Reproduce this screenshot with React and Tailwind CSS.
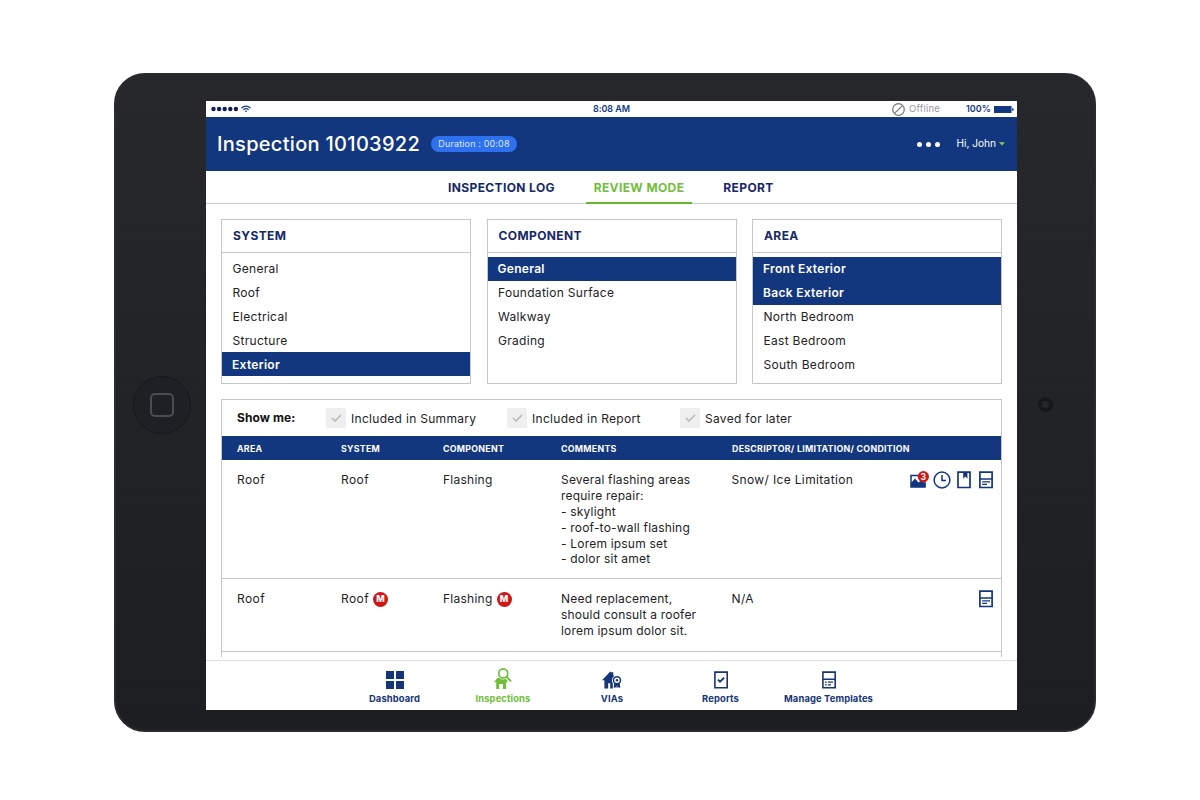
import { useState } from 'react'

const panels = [
  {
    title: 'SYSTEM',
    items: ['General', 'Roof', 'Electrical', 'Structure', 'Exterior'],
    selected: ['Exterior'],
  },
  {
    title: 'COMPONENT',
    items: ['General', 'Foundation Surface', 'Walkway', 'Grading'],
    selected: ['General'],
  },
  {
    title: 'AREA',
    items: ['Front Exterior', 'Back Exterior', 'North Bedroom', 'East Bedroom', 'South Bedroom'],
    selected: ['Front Exterior', 'Back Exterior'],
  },
]

const filters = [
  { label: 'Included in Summary', width: 'w-[181px]' },
  { label: 'Included in Report', width: 'w-[173px]' },
  { label: 'Saved for later', width: 'w-[150px]' },
]

const rows = [
  {
    area: 'Roof',
    system: 'Roof',
    component: 'Flashing',
    comments: [
      'Several flashing areas',
      'require repair:',
      '- skylight',
      '- roof-to-wall flashing',
      '- Lorem ipsum set',
      '- dolor sit amet',
    ],
    descriptor: 'Snow/ Ice Limitation',
    height: 'h-[119px]',
    full: true,
  },
  {
    area: 'Roof',
    system: 'Roof',
    component: 'Flashing',
    marked: true,
    comments: ['Need replacement,', 'should consult a roofer', 'lorem ipsum dolor sit.'],
    descriptor: 'N/A',
    height: 'h-[72.5px]',
  },
]

const PhotoIcon = () => (
  <svg width="20" height="18" viewBox="0 0 20 18">
    <path d="M1 4.5h14v11.5H1z" fill="#fff" stroke="#12377f" strokeWidth="1.5" />
    <path d="M1 12 5 7.5l3.5 4 2.5-2 4.5 3v3.5H1z" fill="#12377f" />
    <circle cx="13.4" cy="5.6" r="5.6" fill="#d21515" />
    <text x="13.4" y="8.6" fontSize="8.5" fontWeight="700" fill="#fff" textAnchor="middle">3</text>
  </svg>
)

const ClockIcon = () => (
  <svg width="18" height="18" viewBox="0 0 18 18" fill="none" stroke="#12377f" strokeWidth="1.5">
    <circle cx="9" cy="9" r="7.9" />
    <path d="M9 4v5.6h4" />
  </svg>
)

const BookmarkIcon = () => (
  <svg width="14" height="18" viewBox="0 0 14 18">
    <path d="M1 1.2h12v15.3H1z" fill="none" stroke="#12377f" strokeWidth="1.7" />
    <path d="M6.2 1h4.2v6.8L8.3 5.6 6.2 7.8z" fill="#12377f" />
  </svg>
)

const NoteIcon = () => (
  <svg width="14" height="18" viewBox="0 0 14 18" fill="none" stroke="#12377f">
    <path d="M.9 1.2h12.2v15.3H.9zM1 8h12" strokeWidth="1.7" />
    <path d="M3.2 10.8h7.8M3.2 13.3H8" strokeWidth="1.3" />
  </svg>
)

const DashboardIcon = () => (
  <svg width="18" height="18" viewBox="0 0 18 18" fill="currentColor">
    <path d="M0 0h8v8H0zM10 0h8v8h-8zM0 10h8v8H0zM10 10h8v8h-8z" />
  </svg>
)

const InspectionsIcon = () => (
  <svg width="18" height="22" viewBox="0 0 18 22">
    <path d="M0 15.2 3.4 11h8.8l1.8 4.2h-2V22H8.9v-5H5.2v5H2.2v-6.8z" fill="currentColor" />
    <circle cx="9.2" cy="6.6" r="5.9" fill="#fff" />
    <path d="m12.5 10 5 5" stroke="#fff" strokeWidth="3.4" />
    <circle cx="9.2" cy="6.4" r="4.5" fill="#fff" stroke="currentColor" strokeWidth="1.7" />
    <path d="m12.4 9.7 4.7 4.7" stroke="currentColor" strokeWidth="1.9" />
  </svg>
)

const ViasIcon = () => (
  <svg width="20" height="18" viewBox="0 0 20 18">
    <path d="M0 9.3 8.3.4l.8.8h2.2v3l2 2V17.6H8.2v-5.4H6.2v5.4H2.4V9.3z" fill="currentColor" />
    <circle cx="15" cy="9.3" r="5.1" fill="#fff" />
    <path d="M10.8 11H20v7h-9.2z" fill="#fff" />
    <path d="m12.3 12-.6 5 1.8-.7.9.8.6-3 .6 3 .9-.8 1.8.7-.6-5z" fill="currentColor" />
    <circle cx="15" cy="9.3" r="3.5" fill="#fff" stroke="currentColor" strokeWidth="1.5" />
    <circle cx="15" cy="9.3" r="1.2" fill="currentColor" />
  </svg>
)

const ReportsIcon = () => (
  <svg width="14" height="18" viewBox="0 0 14 18" fill="none" stroke="currentColor">
    <path d="M.9 1.1h12.3v15.7H.9z" strokeWidth="1.6" />
    <path d="m4 8.6 2 2 4.2-4" strokeWidth="1.9" />
  </svg>
)

const TemplatesIcon = () => (
  <svg width="14" height="18" viewBox="0 0 14 18" fill="none" stroke="currentColor">
    <path d="M.9 1.1h12.3v15.7H.9zM1 8.3h12" strokeWidth="1.6" />
    <path d="M3 11.2h1.7M5.8 11.2H11M3 13.8h1.7M5.8 13.8H9" strokeWidth="1.3" />
  </svg>
)

const tabs = [
  { label: 'Dashboard', icon: DashboardIcon, width: 'w-[108px]' },
  { label: 'Inspections', icon: InspectionsIcon, width: 'w-[109px]' },
  { label: 'VIAs', icon: ViasIcon, width: 'w-[109px]' },
  { label: 'Reports', icon: ReportsIcon, width: 'w-[108px]' },
  { label: 'Manage Templates', icon: TemplatesIcon, width: 'w-[108px]' },
]

const Marker = () => (
  <span className="ml-1 flex h-[15px] w-[15px] items-center justify-center rounded-full bg-[#d01616] text-[9px] font-extrabold tracking-normal text-white">
    M
  </span>
)

const StatusBar = () => (
  <div className="flex h-4 items-center text-[9px] font-semibold text-[#12377f]">
    <div className="flex w-[363px] items-center pl-[5px]">
      <svg width="28" height="6" viewBox="0 0 28 6" fill="#141c55">
        {[0, 1, 2, 3, 4].map((i) => (
          <circle key={i} cx={2.5 + i * 5.6} cy="3" r="2.2" />
        ))}
      </svg>
      <svg className="ml-[2px]" width="10" height="8" viewBox="0 0 10 8" fill="none" stroke="#12377f" strokeWidth="1.2">
        <path d="M.5 3Q5-.9 9.5 3M2.3 4.8Q5 2.6 7.7 4.8" />
        <path d="M3.7 5.9Q5 5 6.3 5.9L5 7.3z" fill="#12377f" stroke="none" />
      </svg>
    </div>
    <span className="w-[85px] text-center tracking-[-0.05px]">8:08 AM</span>
    <div className="ml-auto flex items-center pr-[3px]">
      <svg width="13" height="13" viewBox="0 0 13 13" fill="none" stroke="#77777b" strokeWidth="1.2">
        <circle cx="6.5" cy="6.5" r="5.8" />
        <path d="m2.8 10.2 7.4-7.4" />
      </svg>
      <span className="ml-1 w-[57px] text-[9.5px] font-normal tracking-[0.2px] text-[#98989c]">Offline</span>
      <span className="w-[28px] text-[9px]">100%</span>
      <svg width="20" height="7" viewBox="0 0 20 7" fill="#12377f">
        <path d="M0 0h17.5v7H0zM18.2 1.8Q19.8 2.3 19.8 3.5t-1.6 1.7z" />
      </svg>
    </div>
  </div>
)

const Panel = ({ panel, selected, onSelect }) => (
  <div className="h-[165px] w-[250px] border border-[#c4c6c9]">
    <h2 className="flex h-[33px] items-center border-b border-[#c4c6c9] pl-[11px] text-[12px] font-bold tracking-[0.4px] text-[#16276a]">
      {panel.title}
    </h2>
    <ul className="pt-1">
      {panel.items.map((item) => (
        <li
          key={item}
          onClick={() => onSelect(item)}
          className={
            selected.includes(item)
              ? 'flex h-[23.8px] cursor-pointer items-center bg-[#12377f] pl-[10px] pt-px text-[12px] font-semibold tracking-[0.3px] text-white'
              : 'flex h-[23.8px] cursor-pointer items-center pl-[10.5px] pt-px text-[12px] tracking-[0.3px]'
          }
        >
          {item}
        </li>
      ))}
    </ul>
  </div>
)

export default function App() {
  const [activeTab, setActiveTab] = useState('Inspections')
  const [selection, setSelection] = useState(panels.map((p) => p.selected))

  const select = (index, item) =>
    setSelection(selection.map((s, i) => (i === index ? [item] : s)))

  return (
    <div className="flex h-[800px] w-[1200px] justify-center overflow-hidden bg-white pl-[10px] pt-[73px] font-['Inter',sans-serif] text-[#222225]">
      {/* Tablet body */}
      <div className="flex h-[659px] w-[982px] rounded-[31px] border-2 border-[#292b2e] bg-[#202226] bg-linear-to-b from-[#26282b] to-[#1d1e22]">
        <div className="flex w-[90px] items-center justify-center pl-px pt-[5px]">
          <div className="flex h-[58px] w-[58px] items-center justify-center rounded-full border border-[#15171b] bg-[#1e2025]">
            <div className="h-[24px] w-[24px] rounded-[5px] border-2 border-[#4b4c50]" />
          </div>
        </div>

        {/* Screen */}
        <div className="mt-[26px] flex h-[609px] w-[811px] flex-col bg-white">
          <StatusBar />
          <header className="flex h-[54px] items-center bg-[#12377f] pl-[11px] pr-3 text-white">
            <h1 className="w-[214px] whitespace-nowrap text-[20px] font-medium tracking-[0.3px]">Inspection 10103922</h1>
            <span className="flex h-4 w-[86px] items-center justify-center rounded-full bg-[#2e71ee] text-[9px] tracking-[0.15px] text-[#dce8ff]">
              Duration : 00:08
            </span>
            <div className="ml-auto flex gap-1">
              <span className="h-[5px] w-[5px] rounded-full bg-white" />
              <span className="h-[5px] w-[5px] rounded-full bg-white" />
              <span className="h-[5px] w-[5px] rounded-full bg-white" />
            </div>
            <span className="ml-[17px] text-[10.1px]">Hi, John</span>
            <svg className="ml-[3px]" width="6" height="4" viewBox="0 0 6 4" fill="#83ce57">
              <path d="M0 .3h6L3 3.6z" />
            </svg>
          </header>

          <nav className="flex h-[33px] border-b border-[#c8cacc] pl-[235px] text-[12px] font-bold tracking-[0.38px] text-[#16276a]">
            <button className="h-[33px] w-[121px] text-center">INSPECTION LOG</button>
            <button className="ml-6 h-[33px] w-[106px] border-b-2 border-[#67b52f] pt-[2px] text-center text-[#74bd3c]">REVIEW MODE</button>
            <button className="ml-6 h-[33px] w-[65px] text-center">REPORT</button>
          </nav>

          <main className="flex min-h-0 flex-1 flex-col px-[15px] pt-[15px]">
            <div className="flex justify-between">
              {panels.map((panel, i) => (
                <Panel key={panel.title} panel={panel} selected={selection[i]} onSelect={(item) => select(i, item)} />
              ))}
            </div>

            <section className="mt-[15px] h-[258px] overflow-hidden border-x border-t border-[#c4c6c9] text-[12px] tracking-[0.25px]">
              <div className="flex h-[36px] items-center pl-[15px] tracking-[0.3px]">
                <span className="w-[89px] font-bold tracking-[0.1px] text-[#111114]">Show me:</span>
                {filters.map(({ label, width }) => (
                  <label key={label} className={`flex items-center ${width}`}>
                    <span className="mr-[5px] flex h-5 w-5 items-center justify-center bg-[#efeff0]">
                      <svg width="11" height="8" viewBox="0 0 11 8" fill="none" stroke="#b8b9bb" strokeWidth="1.6">
                        <path d="m1 4 3 3 6-6" />
                      </svg>
                    </span>
                    <span className="pt-px">{label}</span>
                  </label>
                ))}
              </div>

              <div className="grid h-6 grid-cols-[104px_102px_118px_171px_1fr] items-center bg-[#12377f] pl-[15px] pt-px text-[8.8px] font-bold tracking-[0.28px] text-white">
                <span>AREA</span>
                <span>SYSTEM</span>
                <span>COMPONENT</span>
                <span>COMMENTS</span>
                <span>DESCRIPTOR/ LIMITATION/ CONDITION</span>
              </div>

              {rows.map((row, i) => (
                <div
                  key={i}
                  className={`grid grid-cols-[104px_102px_118px_170px_1fr_auto] items-start border-b border-[#c4c6c9] pl-[15px] pr-[8px] pt-[12.4px] leading-[15.8px] ${row.height}`}
                >
                  <span className="tracking-[0.4px]">{row.area}</span>
                  <span className="flex items-center tracking-[0.4px]">{row.system}{row.marked && <Marker />}</span>
                  <span className="flex items-center">{row.component}{row.marked && <Marker />}</span>
                  <div className="whitespace-nowrap tracking-[0.2px]">
                    {row.comments.map((line) => (
                      <p key={line}>{line}</p>
                    ))}
                  </div>
                  <span className="pl-[0.5px] tracking-[0.35px]">{row.descriptor}</span>
                  <div className="-mt-px flex items-center">
                    {row.full && (
                      <>
                        <PhotoIcon />
                        <span className="ml-[3px]"><ClockIcon /></span>
                        <span className="ml-[6px] mr-[8px]"><BookmarkIcon /></span>
                      </>
                    )}
                    <NoteIcon />
                  </div>
                </div>
              ))}
            </section>
          </main>

          <footer className="flex h-[50px] shrink-0 justify-center border-t border-[#dfdfdf] text-[9.4px] font-bold tracking-[0.13px]">
            {tabs.map(({ label, icon: Icon, width }) => (
              <button
                key={label}
                onClick={() => setActiveTab(label)}
                className={`flex flex-col items-center whitespace-nowrap ${width} ${activeTab === label ? 'text-[#6fbd38]' : 'text-[#163478]'}`}
              >
                <span className="flex h-[31px] items-end pb-[3px]"><Icon /></span>
                <span className="leading-[14px]">{label}</span>
              </button>
            ))}
          </footer>
        </div>

        {/* Camera */}
        <div className="flex flex-1 items-center justify-center pr-[20px] pt-[4px]">
          <div className="flex h-[15px] w-[15px] items-center justify-center rounded-full bg-[#15171a]">
            <div className="h-[7px] w-[7px] rounded-full bg-[#24262a]" />
          </div>
        </div>
      </div>
    </div>
  )
}
